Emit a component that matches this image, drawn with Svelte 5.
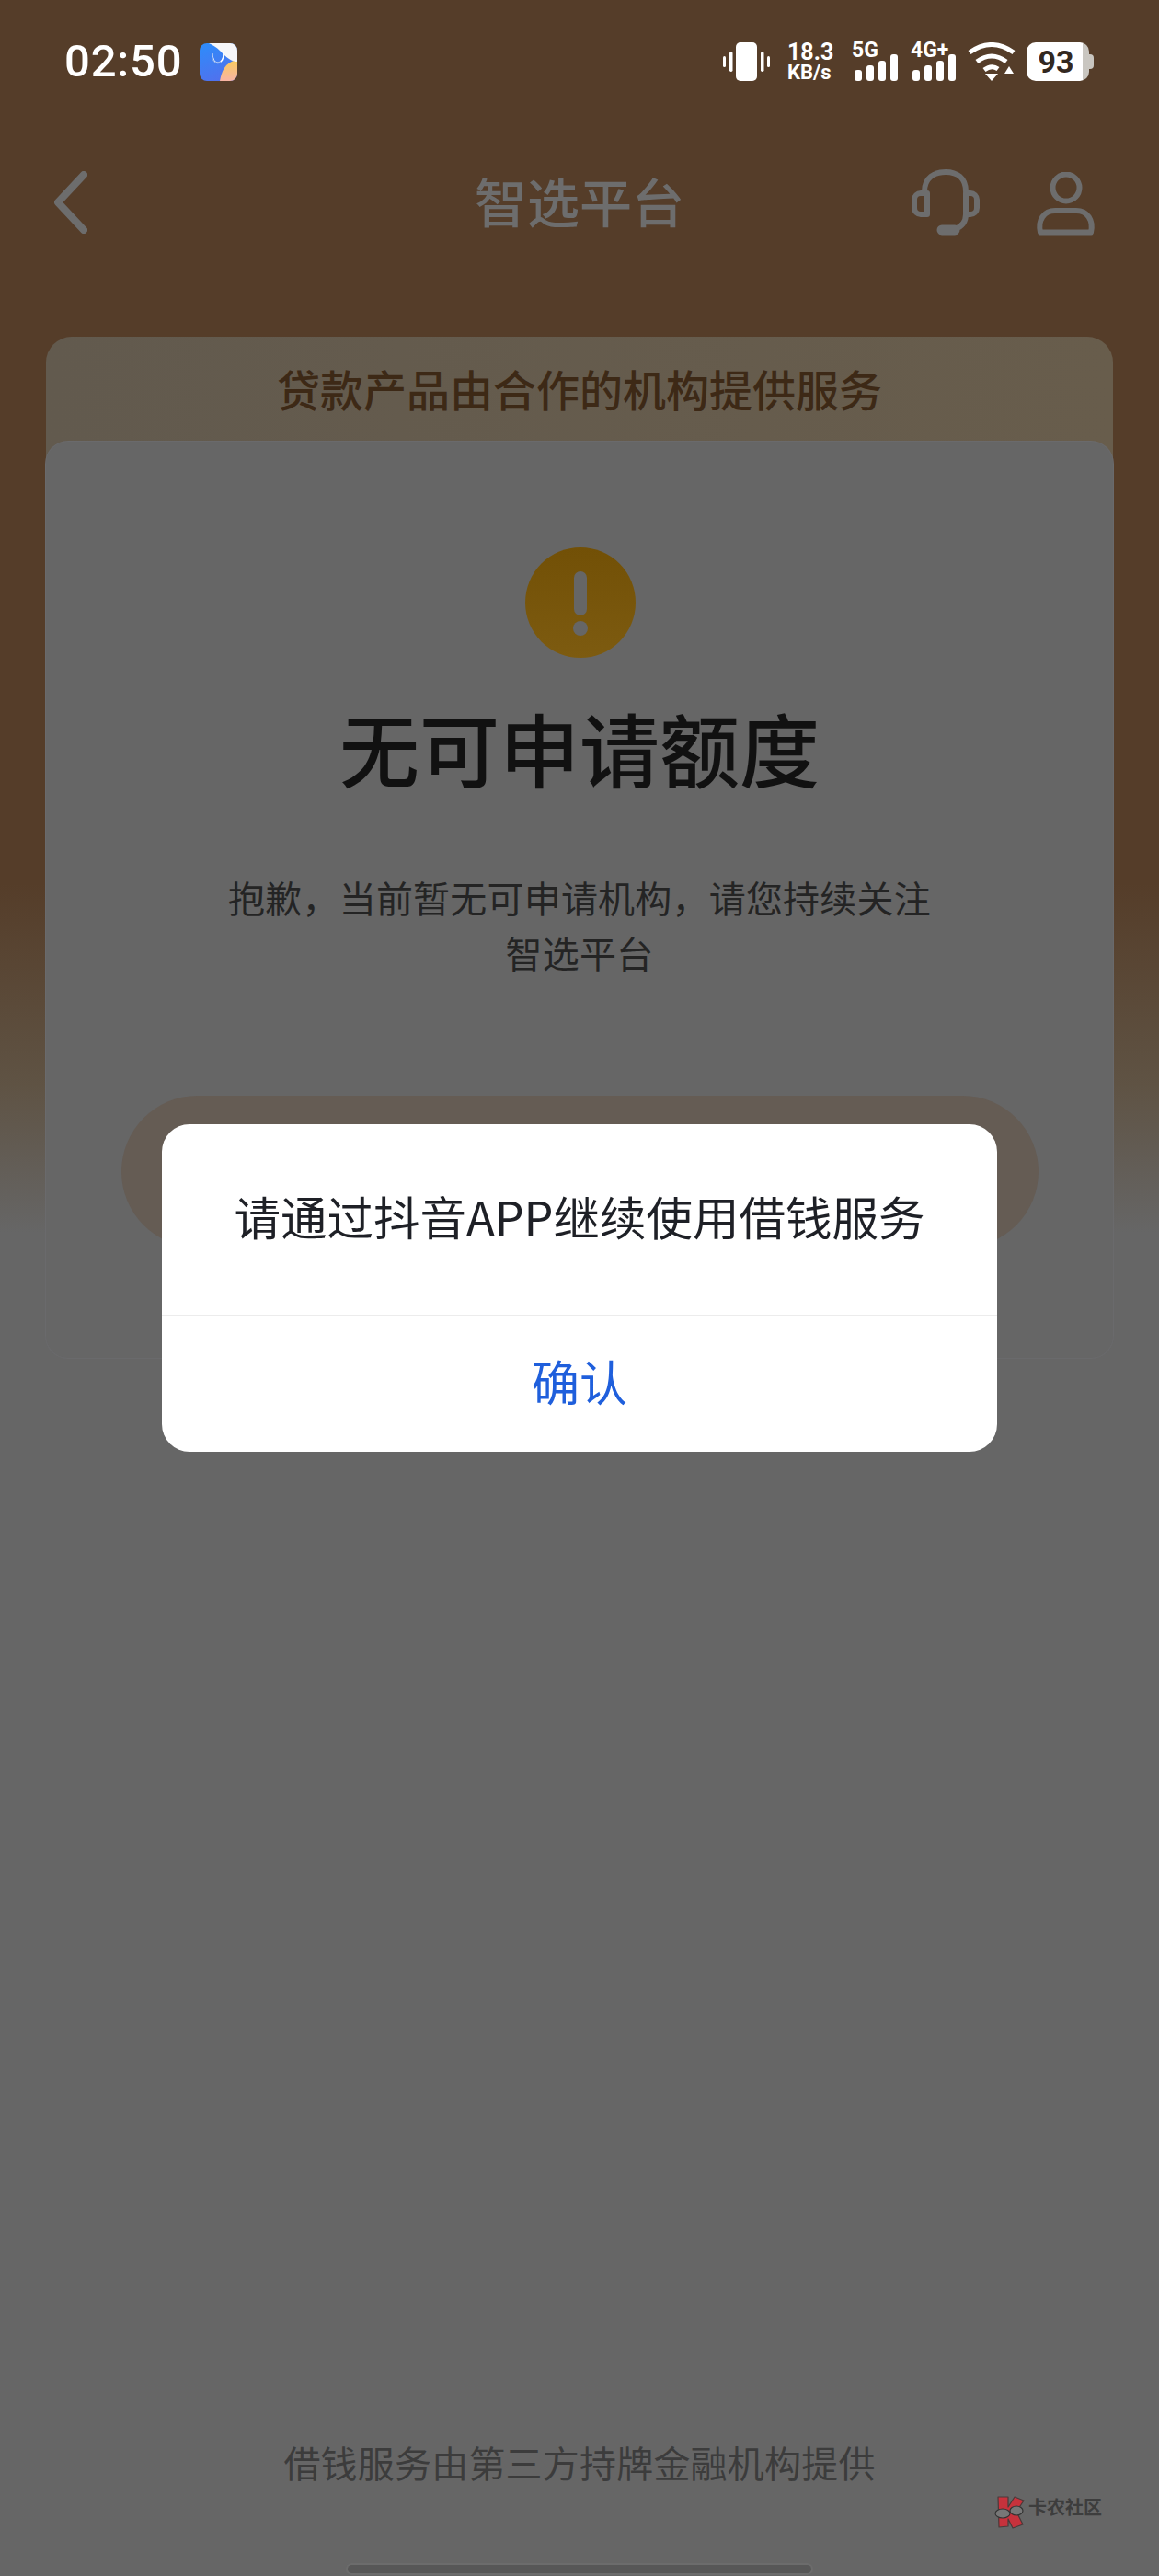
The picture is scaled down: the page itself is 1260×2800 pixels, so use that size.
<script>
  const barTop = [30, 25, 20, 13];
  const bars5g = [3, 16, 29, 42];
  const bars4g = [2, 15, 28, 41];
</script>

<div class="page" lang="zh-CN">
  <header class="status">
    <div class="status-left">
      <span class="time">02:50</span>
      <svg class="app-icon" width="41" height="41" viewBox="0 0 41 41">
        <defs>
          <linearGradient id="storeBlue" x1="0" y1="0" x2="0.4" y2="1">
            <stop offset="0" stop-color="#2c8dfb" />
            <stop offset="1" stop-color="#4f72ee" />
          </linearGradient>
          <linearGradient id="storeWarm" x1="0" y1="0" x2="0" y2="1">
            <stop offset="0" stop-color="#f8cb5c" />
            <stop offset="1" stop-color="#f8b4a4" />
          </linearGradient>
          <clipPath id="storeClip"><rect width="41" height="41" rx="8" /></clipPath>
        </defs>
        <g clip-path="url(#storeClip)">
          <rect width="41" height="41" fill="url(#storeBlue)" />
          <path d="M22 41 C24 30 28 20 41 18 V41 Z" fill="url(#storeWarm)" />
          <path d="M10 0 H41 V20 C33 20 27 13 22 8 C18 4 14 2 10 0 Z" fill="#f6f6f8" />
          <path d="M14 11 C13 25 27 25 26 10" fill="none" stroke="#fff" stroke-width="1.6" />
          <path d="M14 11 C13 21 19 23 23 20" fill="none" stroke="#2d6fe0" stroke-width="0.8" />
        </g>
      </svg>
    </div>
    <div class="status-right">
      <svg width="51" height="42" viewBox="0 0 51 42" fill="#fff">
        <rect x="0" y="15" width="3" height="12" rx="1.5" />
        <rect x="7" y="10" width="3.5" height="22" rx="1.7" />
        <rect x="14" y="0" width="23" height="42" rx="5" />
        <rect x="41" y="10" width="3.5" height="22" rx="1.7" />
        <rect x="48" y="15" width="3" height="12" rx="1.5" />
      </svg>
      <div class="speed">
        <span>18.3</span>
        <span class="speed-unit">KB/s</span>
      </div>
      <div class="net">
        <span class="net-label">5G</span>
        <svg width="50" height="42" viewBox="0 0 50 42" fill="#fff">
          {#each bars5g as x, i}
            <rect {x} y={barTop[i]} width="8" height={42 - barTop[i]} rx="3" />
          {/each}
        </svg>
      </div>
      <div class="net">
        <span class="net-label">4G+</span>
        <svg width="50" height="42" viewBox="0 0 50 42" fill="#fff">
          {#each bars4g as x, i}
            <rect {x} y={barTop[i]} width="8" height={42 - barTop[i]} rx="3" />
          {/each}
        </svg>
      </div>
      <svg width="52" height="42" viewBox="0 0 52 42" fill="none" stroke="#fff" stroke-width="5">
        <path d="M2 11 Q26 -6 50 11" />
        <path d="M10 21 Q26 9 42 21" />
        <path d="M18 30 Q26 24 33 29" />
        <path d="M19 34 H33 L26 42 Z" fill="#fff" stroke="none" />
        <path d="M40 34 L45 26 L50 34 Z" fill="#fff" stroke="none" />
      </svg>
      <div class="battery">
        <span class="battery-level">93</span>
      </div>
    </div>
  </header>

  <nav class="nav">
    <svg class="back" width="36" height="68" viewBox="0 0 36 68" fill="none" stroke="#6d6d6d" stroke-width="8" stroke-linecap="round" stroke-linejoin="round">
      <path d="M32 4 L4 34 L32 64" />
    </svg>
    <div class="nav-title">智选平台</div>
    <div class="nav-actions">
      <svg width="76" height="72" viewBox="0 0 76 72" fill="none" stroke="#6d6d6d" stroke-width="6" stroke-linecap="round" stroke-linejoin="round">
        <path d="M15 24 C15 9 26 3 38 3 C50 3 60 9 60 24" />
        <path d="M18 26 H11 a7 7 0 0 0 -7 7 v9 a7 7 0 0 0 7 7 H18 Z" />
        <path d="M60 26 H65 a7 7 0 0 1 7 7 v9 a7 7 0 0 1 -7 7 H60 Z" />
        <path d="M60 49 q0 12 -12 16" />
        <path d="M34 66 H48" stroke-width="11" />
      </svg>
      <svg width="67" height="69" viewBox="0 0 67 69" fill="none" stroke="#6d6d6d" stroke-width="6" stroke-linejoin="round">
        <circle cx="34" cy="17" r="14.5" />
        <path d="M6 65.5 C3 52 10 42 22 42 H45 C57 42 64 52 61 65.5 Z" />
      </svg>
    </div>
  </nav>

  <main class="card">
    <div class="card-head">贷款产品由合作的机构提供服务</div>
    <div class="card-body">
      <svg class="warn" width="120" height="120" viewBox="0 0 120 120">
        <defs>
          <linearGradient id="warnFill" x1="0" y1="0" x2="0" y2="1">
            <stop offset="0" stop-color="#725006" />
            <stop offset="1" stop-color="#7d5b10" />
          </linearGradient>
        </defs>
        <circle cx="60" cy="60" r="60" fill="url(#warnFill)" />
        <rect x="53" y="26" width="14" height="48" rx="7" fill="#666" />
        <circle cx="60" cy="88" r="8" fill="#666" />
      </svg>
      <h1 class="title">无可申请额度</h1>
      <p class="desc">抱歉，当前暂无可申请机构，请您持续关注智选平台</p>
      <div class="pill"></div>
    </div>
  </main>

  <footer class="foot">借钱服务由第三方持牌金融机构提供</footer>
  <div class="home-bar"></div>

  <div class="dialog-layer">
    <div class="dialog">
      <div class="dialog-text">请通过抖音APP继续使用借钱服务</div>
      <div class="dialog-btn">确认</div>
    </div>
  </div>

  <div class="watermark">
    <svg width="34" height="36" viewBox="0 0 34 36">
      <path d="M5 1 H16 V12 L23 1 L33 5 L25 17 L32 31 L21 35 L16 25 V33 L6 34 Z" fill="#c7323c" stroke="#4a3a3a" stroke-width="1.2" stroke-linejoin="round" />
      <ellipse cx="10" cy="19" rx="8" ry="5" fill="#777" stroke="#333" stroke-width="1.2" />
      <ellipse cx="25" cy="16" rx="7" ry="5" fill="#777" stroke="#333" stroke-width="1.2" />
    </svg>
    <span>卡农社区</span>
  </div>
</div>

<style>
  :global(body) {
    margin: 0;
    background: #666;
  }

  .page {
    position: relative;
    width: 1260px;
    height: 2800px;
    display: flex;
    flex-direction: column;
    overflow: hidden;
    font-family: "Noto Sans CJK SC", "Noto Sans", sans-serif;
    background: linear-gradient(180deg, #553d29 0, #553d29 960px, #5f5344 1180px, #666 1340px);
  }

  .status {
    display: flex;
    justify-content: space-between;
    align-items: flex-start;
    height: 129px;
    padding: 46px 70px 0;
  }

  .status-left {
    display: flex;
    align-items: center;
    height: 42px;
    gap: 19px;
  }

  .time {
    font-family: Roboto, sans-serif;
    font-weight: 500;
    font-size: 49px;
    line-height: 42px;
    letter-spacing: 0.8px;
    color: #fff;
  }

  .status-right {
    display: flex;
    align-items: flex-start;
    height: 42px;
  }

  .status-right > :nth-child(1) { margin-right: 19px; }
  .status-right > :nth-child(2) { margin-right: 20px; }
  .status-right > :nth-child(3) { margin-right: 14px; }
  .status-right > :nth-child(4) { margin-right: 12px; }
  .status-right > :nth-child(5) { margin-right: 12px; }

  .speed {
    display: flex;
    flex-direction: column;
    width: 50px;
    color: #fff;
    font-family: Roboto, sans-serif;
    font-weight: 700;
    font-size: 25px;
    line-height: 22px;
  }

  .speed-unit {
    font-size: 22px;
    line-height: 22px;
    font-weight: 700;
  }

  .net {
    position: relative;
    width: 50px;
    height: 42px;
  }

  .net-label {
    position: absolute;
    left: 0;
    top: 0;
    font-family: Roboto, sans-serif;
    font-weight: 700;
    font-size: 23px;
    line-height: 18px;
    color: #fff;
    white-space: nowrap;
  }

  .battery {
    position: relative;
    width: 68px;
    height: 42px;
    margin-right: 6px;
    border-radius: 10px;
    background: linear-gradient(90deg, #fff 0, #fff 90%, #c9c6c0 90%);
    display: flex;
    align-items: center;
    justify-content: center;
  }

  .battery::after {
    content: "";
    position: absolute;
    left: 68px;
    top: 13px;
    width: 5px;
    height: 16px;
    border-radius: 0 4px 4px 0;
    background: #c9c6c0;
  }

  .battery-level {
    padding-right: 4px;
    font-family: Roboto, sans-serif;
    font-weight: 700;
    font-size: 34px;
    line-height: 42px;
    color: #33281f;
  }

  .nav {
    display: grid;
    grid-template-columns: 1fr auto 1fr;
    align-items: center;
    height: 90px;
    padding: 0 59px;
  }

  .nav-title {
    margin-top: -6px;
    font-size: 57px;
    line-height: 90px;
    font-weight: 500;
    color: #6d6d6d;
  }

  .nav-actions {
    display: flex;
    justify-content: flex-end;
    align-items: flex-end;
    gap: 59px;
    margin-right: 9px;
  }

  .card {
    margin: 101px 50px 0;
  }

  .card-head {
    height: 138px;
    margin-bottom: -24px;
    box-sizing: border-box;
    padding-top: 22px;
    border-radius: 28px 28px 0 0;
    background: linear-gradient(90deg, #625a4e, #685d4c);
    text-align: center;
    font-size: 47px;
    line-height: 68px;
    font-weight: 500;
    color: #3d2916;
  }

  .card-body {
    position: relative;
    display: flex;
    flex-direction: column;
    align-items: center;
    padding: 115px 0 120px;
    border-radius: 24px;
    background: #666;
    box-shadow: 0 0 0 1px #6a6a6c;
  }

  .warn {
    margin-left: 2px;
  }

  .title {
    margin: 47px 0 0;
    font-size: 87px;
    line-height: 100px;
    font-weight: 500;
    color: #111;
  }

  .desc {
    width: 780px;
    margin: 83px 0 0;
    text-align: center;
    font-size: 40px;
    line-height: 60px;
    letter-spacing: 0.2px;
    color: #242424;
  }

  .pill {
    width: 997px;
    height: 165px;
    margin-top: 126px;
    border-radius: 83px;
    background: #655c54;
  }

  .foot {
    margin-top: auto;
    text-align: center;
    font-size: 40px;
    line-height: 60px;
    letter-spacing: 0.2px;
    color: #3c3c3c;
  }

  .home-bar {
    width: 504px;
    height: 9px;
    margin: 82px auto 3px;
    border-radius: 5px;
    background: #575757;
    box-shadow: 0 0 0 2px #6c6c6c;
  }

  .dialog-layer {
    position: absolute;
    inset: 0;
    display: flex;
    align-items: center;
    justify-content: center;
  }

  .dialog {
    width: 908px;
    border-radius: 30px;
    background: #fff;
    text-align: center;
  }

  .dialog-text {
    height: 208px;
    box-sizing: border-box;
    padding-top: 64px;
    border-bottom: 1px solid #ececec;
    font-size: 50.5px;
    line-height: 70px;
    color: #1e2026;
    white-space: nowrap;
  }

  .dialog-btn {
    height: 148px;
    font-size: 52px;
    line-height: 141px;
    color: #1f5fdc;
  }

  .watermark {
    position: absolute;
    left: 1080px;
    top: 2713px;
    display: flex;
    align-items: flex-start;
    gap: 4px;
    font-size: 20px;
    line-height: 24px;
    font-weight: 700;
    color: #3d3d3d;
  }
</style>
